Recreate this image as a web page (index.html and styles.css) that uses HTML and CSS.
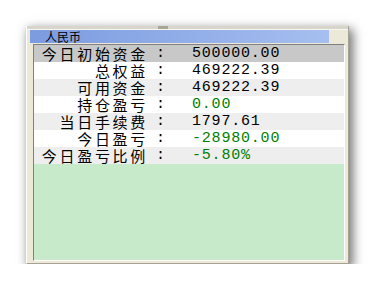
FILE: index.html
```html
<!DOCTYPE html>
<html lang="zh-CN">
<head>
  <meta charset="UTF-8">
  <title>资金</title>
  <link rel="stylesheet" href="styles.css">
</head>
<body>
  <div class="window">
    <div class="grip"><div class="grip-tab"></div></div>
    <div class="header">人民币</div>
    <div class="panel">
      <div class="row selected">
        <div class="label">今日初始资金</div><div class="colon">:</div><div class="value">500000.00</div>
      </div>
      <div class="row">
        <div class="label">总权益</div><div class="colon">:</div><div class="value">469222.39</div>
      </div>
      <div class="row alt">
        <div class="label">可用资金</div><div class="colon">:</div><div class="value">469222.39</div>
      </div>
      <div class="row">
        <div class="label">持仓盈亏</div><div class="colon">:</div><div class="value green">0.00</div>
      </div>
      <div class="row alt">
        <div class="label">当日手续费</div><div class="colon">:</div><div class="value">1797.61</div>
      </div>
      <div class="row">
        <div class="label">今日盈亏</div><div class="colon">:</div><div class="value green">-28980.00</div>
      </div>
      <div class="row alt">
        <div class="label">今日盈亏比例</div><div class="colon">:</div><div class="value green">-5.80%</div>
      </div>
    </div>
  </div>
</body>
</html>
```

FILE: styles.css
```css
body {
  margin: 0;
  background: #fff;
  font-family: "Noto Sans CJK SC", sans-serif;
}

.window {
  margin: 26px 0 0 26px;
  width: 323px;
  height: 238px;
  box-sizing: border-box;
  background: #ece9d8;
  border-left: 1px solid #fff;
  border-right: 1px solid #a5a294;
  border-bottom: 1px solid #a5a294;
  box-shadow: 3px 4px 10px 1px rgba(0, 0, 0, 0.55);
}

.grip {
  height: 3px;
  background: #d8d5cc;
  border-bottom: 1px solid #f7f6f0;
  display: flex;
}

.grip-tab {
  width: 10px;
  margin-left: 131px;
  background: #aaa696;
}

.header {
  margin-left: 3px;
  width: 299px;
  height: 13px;
  box-sizing: border-box;
  padding-left: 15px;
  background: linear-gradient(90deg, #7c9be0, #a6bff0);
  font-size: 12px;
  line-height: 13px;
  color: #000;
}

.panel {
  margin: 1px 0 0 6px;
  width: 312px;
  height: 217px;
  box-sizing: border-box;
  border-top: 1px solid #808080;
  border-left: 1px solid #808080;
  border-right: 1px solid #fff;
  border-bottom: 1px solid #fff;
  background: #c7ebca;
}

.row {
  display: grid;
  grid-template-columns: 114px 44px 1fr;
  height: 17px;
  line-height: 17px;
  background: #fff;
  color: #000;
}

.row.alt {
  background: #eeeeee;
}

.row.selected {
  background: #c8c8c8;
}

.label {
  text-align: right;
  font-size: 15px;
  letter-spacing: 2.7px;
  white-space: nowrap;
}

.colon,
.value {
  font-family: "Liberation Mono", monospace;
  font-size: 15px;
  letter-spacing: 0.8px;
  white-space: nowrap;
}

.colon {
  padding-left: 8px;
}

.green {
  color: #008000;
}
```
